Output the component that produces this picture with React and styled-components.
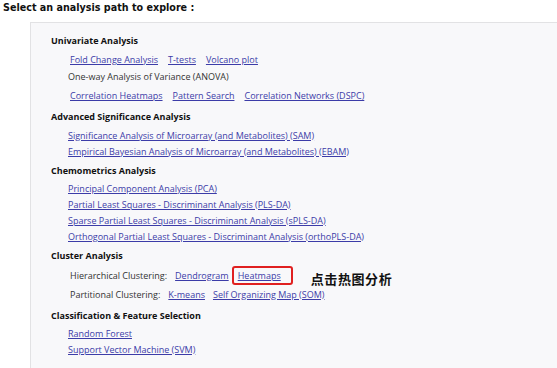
import styled, { createGlobalStyle } from "styled-components";

const GlobalStyle = createGlobalStyle`
  body {
    margin: 0;
    background: #ffffff;
    font-family: "Open Sans", "DejaVu Sans", sans-serif;
  }
`;

const Page = styled.div`
  width: 557px;
  height: 368px;
  overflow: hidden;
  background: #ffffff;
`;

const Title = styled.div`
  font-family: "DejaVu Sans", Verdana, sans-serif;
  font-weight: bold;
  font-size: 9.6px;
  color: #111;
  padding: 2px 0 0 3px;
  height: 22px;
  box-sizing: border-box;
`;

const Panel = styled.div`
  margin-left: 30px;
  border-top: 1px solid #e2e2e4;
  border-left: 1px solid #e2e2e4;
  background: #f8f8fa;
  padding: 8px 0 20px 20px;
  height: 400px;
`;

const Section = styled.div`
  margin-bottom: ${(p) => p.$gap ?? 2}px;
`;

const Heading = styled.div`
  font-weight: bold;
  font-size: 9px;
  color: #111;
  height: 20px;
  line-height: 20px;
`;

const Row = styled.div`
  display: flex;
  align-items: center;
  gap: ${(p) => p.$gap ?? 10}px;
  height: ${(p) => p.$h || 16}px;
  font-size: 9px;
  padding-left: ${(p) => p.$indent || 17}px;
  color: #333;
`;

const Label = styled.span`
  color: #333;
`;

const Link = styled.a`
  color: #3c3ca8;
  text-decoration: underline;
  cursor: pointer;
`;

const Boxed = styled.span`
  border: 2px solid #e02020;
  border-radius: 3px;
  padding: 1px 10px 1px 4px;
  margin-left: -5px;
`;

const Note = styled.span`
  font-family: "Noto Sans CJK SC", serif;
  font-weight: bold;
  font-size: 13px;
  color: #111;
  margin-left: 10px;
  position: relative;
  top: 3px;
  letter-spacing: 0.6px;
`;

export default function App() {
  return (
    <Page>
      <GlobalStyle />
      <Title>Select an analysis path to explore :</Title>
      <Panel>
        <Section $gap={0}>
          <Heading>Univariate Analysis</Heading>
          <Row $indent={19} $h={17}>
            <Link>Fold Change Analysis</Link>
            <Link>T-tests</Link>
            <Link>Volcano plot</Link>
          </Row>
          <Row>
            <Label>One-way Analysis of Variance (ANOVA)</Label>
          </Row>
          <Row $indent={19} $h={23}>
            <Link>Correlation Heatmaps</Link>
            <Link>Pattern Search</Link>
            <Link>Correlation Networks (DSPC)</Link>
          </Row>
        </Section>
        <Section>
          <Heading>Advanced Significance Analysis</Heading>
          <Row>
            <Link>Significance Analysis of Microarray (and Metabolites) (SAM)</Link>
          </Row>
          <Row>
            <Link>Empirical Bayesian Analysis of Microarray (and Metabolites) (EBAM)</Link>
          </Row>
        </Section>
        <Section>
          <Heading>Chemometrics Analysis</Heading>
          <Row $h={15}>
            <Link>Principal Component Analysis (PCA)</Link>
          </Row>
          <Row>
            <Link>Partial Least Squares - Discriminant Analysis (PLS-DA)</Link>
          </Row>
          <Row>
            <Link>Sparse Partial Least Squares - Discriminant Analysis (sPLS-DA)</Link>
          </Row>
          <Row>
            <Link>Orthogonal Partial Least Squares - Discriminant Analysis (orthoPLS-DA)</Link>
          </Row>
        </Section>
        <Section>
          <Heading>Cluster Analysis</Heading>
          <Row $indent={19} $h={18} $gap={8}>
            <Label>Hierarchical Clustering:</Label>
            <Link>Dendrogram</Link>
            <Boxed>
              <Link>Heatmaps</Link>
            </Boxed>
            <Note>点击热图分析</Note>
          </Row>
          <Row $indent={19} $h={20} $gap={8}>
            <Label>Partitional Clustering:</Label>
            <Link>K-means</Link>
            <Link>Self Organizing Map (SOM)</Link>
          </Row>
        </Section>
        <Section>
          <Heading>Classification &amp; Feature Selection</Heading>
          <Row $h={15}>
            <Link>Random Forest</Link>
          </Row>
          <Row>
            <Link>Support Vector Machine (SVM)</Link>
          </Row>
        </Section>
      </Panel>
    </Page>
  );
}
